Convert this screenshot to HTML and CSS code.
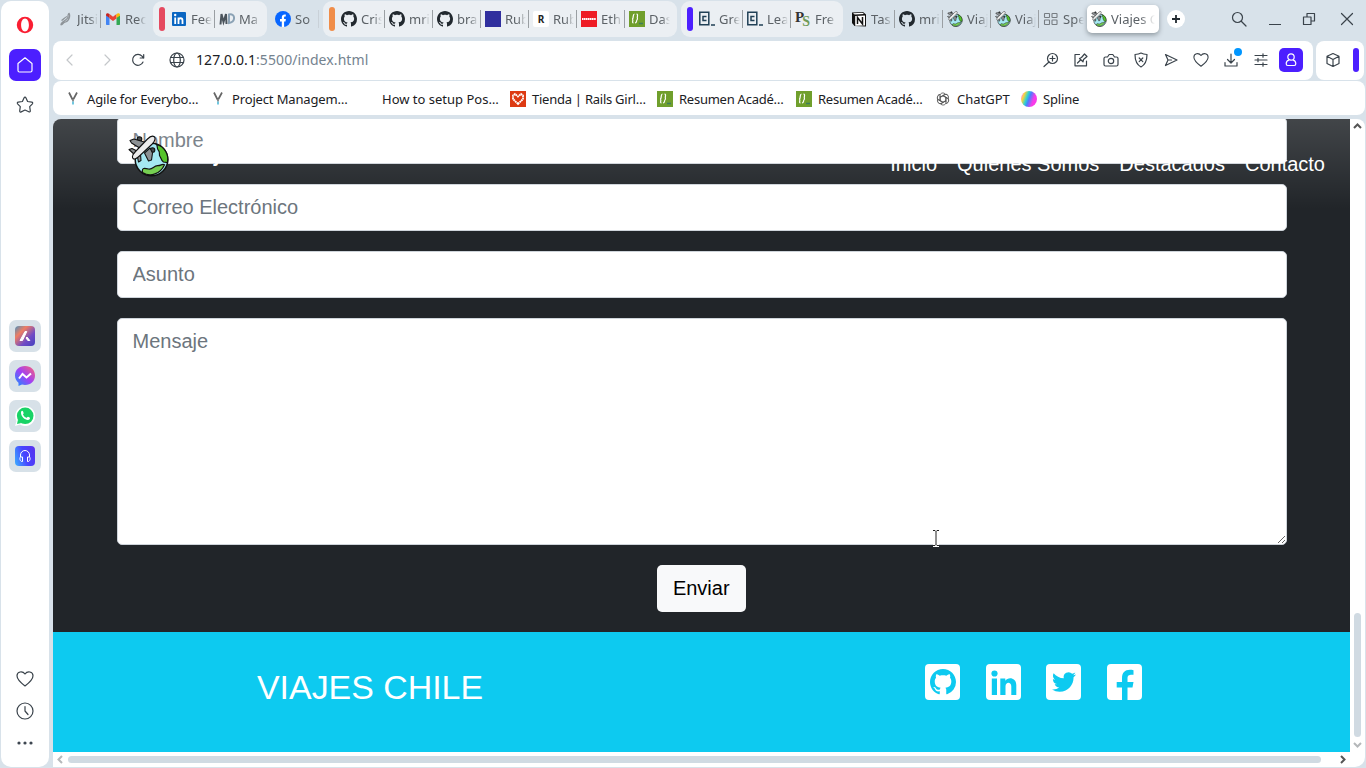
FILE: index.html
```html
<!DOCTYPE html>
<html lang="es">
<head>
<meta charset="utf-8">
<title>Viajes Chile</title>
<link rel="stylesheet" href="styles.css">
</head>
<body>
<svg class="defs" width="0" height="0">
  <symbol id="github" viewBox="0 0 16 16"><path fill-rule="evenodd" d="M8 0C3.58 0 0 3.58 0 8c0 3.54 2.29 6.53 5.47 7.59.4.07.55-.17.55-.38 0-.19-.01-.82-.01-1.49-2.01.37-2.53-.49-2.69-.94-.09-.23-.48-.94-.82-1.13-.28-.15-.68-.52-.01-.53.63-.01 1.08.58 1.23.82.72 1.21 1.87.87 2.33.66.07-.52.28-.87.51-1.07-1.78-.2-3.64-.89-3.64-3.95 0-.87.31-1.59.82-2.15-.08-.2-.36-1.02.08-2.12 0 0 .67-.21 2.2.82.64-.18 1.32-.27 2-.27.68 0 1.36.09 2 .27 1.53-1.04 2.2-.82 2.2-.82.44 1.1.16 1.92.08 2.12.51.56.82 1.27.82 2.15 0 3.07-1.87 3.75-3.65 3.95.29.25.54.73.54 1.48 0 1.07-.01 1.93-.01 2.2 0 .21.15.46.55.38A8.013 8.013 0 0016 8c0-4.42-3.58-8-8-8z"/></symbol>
  <symbol id="travel" viewBox="0 0 42 42">
    <circle cx="23.500" cy="24.500" r="16.300" fill="#a5e8f2" stroke="#111" stroke-width="1.500"/>
    <path d="M28.500 9.500c1.500 2 0 4 2 6s0 4 1.500 6 1 4 3.500 5.500l4 .5c1.500-8-3-16-11-18z" fill="#56c42c" stroke="#111" stroke-width="1.200"/>
    <path d="M14.500 37.500c-1-5 2-4.500 6-3.500s5-3 9-3.300c4 0 4-2.200 7-1-4 9-14 13-22 7.800z" fill="#76cf52" stroke="#111" stroke-width="1.200"/>
    <g fill="#8d9194" stroke="#111" stroke-width="1.100" stroke-linejoin="round">
      <circle cx="11.500" cy="4" r="2.300" fill="#44484b"/>
      <path d="M2 5.500L6 4l12 3.500-5.500 6L3.500 8z"/>
      <circle cx="24.500" cy="15" r="2.300" fill="#44484b"/>
      <path d="M16.500 18l5.500-5 2.500 5-1 7-3 1z"/>
      <path d="M1 14.500l3-1 6 3-2.500 4z"/>
      <path d="M9.500 22l3-2.500.5 6-2.500 1.500z"/>
    </g>
    <path d="M5 23.500c-1.500-2 .5-5 2.500-7L19.500 4c2-2 5-3.500 6.700-2.300 1.700 1.500.5 4.800-2 7.300L12 20.500c-2.500 2.300-5.500 4.500-7 3z" fill="#ececec" stroke="#111" stroke-width="1.100"/>
  </symbol>
  <symbol id="braces" viewBox="0 0 16 16"><path fill="#709f2c" d="M0 0h16v16H0z"/><path d="M5.500 3C4 3 4.500 5 4 7c0 1-1 1-1 1s1 0 .8 1.500S3.300 12 4.500 12M7.500 3c1.500 0 1 2 .8 3.500S9 8 9 8 8 8 7.700 9.500 7.500 12 6 12" fill="none" stroke="#fff" stroke-width="1.200"/><path d="M10 12.500h4" stroke="#3c7d5d" stroke-width="1.500"/></symbol>
  <symbol id="ccase" viewBox="0 0 16 16"><path d="M.8 1.200h9v12.500h-9zM12 14h4M7.500 5.500H4v4h3.500" fill="none" stroke="#204056" stroke-width="1.500"/></symbol>
  <symbol id="ymark" viewBox="0 0 16 16"><path d="M4 1.500l3.500 7M12 1.500L8.500 8" fill="none" stroke="#666" stroke-width="1.700"/><path d="M8 8v2.500" stroke="#666" stroke-width="1.500"/><path d="M8 10.500v3" stroke="#42b4d4" stroke-width="1.500"/></symbol>
  <symbol id="heart" viewBox="0 0 18 18"><path d="M9 16C5 13 1 9.500 1 5.800 1 1.500 6.500.5 9 4c2.500-3.500 8-2.500 8 1.800C17 9.500 13 13 9 16z"/></symbol>
</svg>

<aside class="sidebar">
  <svg class="opera" width="18" height="18" viewBox="0 0 18 18"><path fill="#fa1e32" fill-rule="evenodd" d="M9 .7a8.200 8.300 0 100 16.600A8.200 8.300 0 009 .7zm0 1.800c2.300 0 3.900 2.900 3.900 6.500s-1.600 6.500-3.900 6.500S5.100 12.600 5.100 9 6.700 2.500 9 2.500z"/></svg>
  <div class="tile home"><svg class="line" width="16" height="16" viewBox="0 0 16 16"><path d="M1 6.500L8 .8l7 5.700v7c0 1-.7 1.500-1.500 1.500h-11C1.700 15 1 14.500 1 13.500z"/></svg></div>
  <svg class="line star" width="18" height="18" viewBox="0 0 18 18"><path d="M9 1.200c.5 0 .8.300 1 .7l1.600 3.600 4.200.6c.9.200 1.200 1 .6 1.700l-2.700 2.800.6 4.200c.1 1-.7 1.500-1.500 1L9 14l-3.800 1.900c-.8.400-1.600-.1-1.500-1l.6-4.300-2.700-2.800c-.6-.7-.3-1.500.6-1.700l4.200-.6L8 1.900c.2-.4.500-.7 1-.7z"/></svg>
  <div class="apps">
    <div class="tile"><i class="app aria"><svg width="20" height="20" viewBox="0 0 20 20"><path d="M10 5.500h1.800L7.500 14.500H5zM12 11l2.800 3.500h-2L11 12z" fill="#fff" stroke="#fff" stroke-linejoin="round"/></svg></i></div>
    <div class="tile"><svg width="20" height="20" viewBox="0 0 20 20"><defs><linearGradient id="ms" x1="0" y1="1" x2="1" y2="0"><stop stop-color="#1292ff"/><stop offset=".5" stop-color="#a040f5"/><stop offset="1" stop-color="#ff6373"/></linearGradient></defs><path fill="url(#ms)" d="M10 0c6 0 10 4 10 9.500S16 19 10 19c-1 0-2-.1-3-.4L3.500 20v-3.300C1.300 15 0 12.500 0 9.500 0 4 4 0 10 0z"/><path d="M4 12.500L7.500 8l4 3.500L16 7.500" fill="none" stroke="#fff" stroke-width="2"/></svg></div>
    <div class="tile"><svg width="20" height="20" viewBox="0 0 20 20"><path fill="#fff" d="M0 20l1.500-5A10 10 0 115 18.600z"/><circle cx="10.200" cy="9.800" r="8.300" fill="#19d366"/><path d="M2 18l1-4.500 3.500 3.500z" fill="#19d366"/><path d="M6 6c1-2 2-1.200 2.600 1 .3.700-.9 1.200-.5 1.700.9 1.500 1.900 2.500 3.300 3 .6.300 1-1.200 1.600-1 2 .9 2.500 1 1.600 2.500-2 2.500-9-1.500-8.600-7.200z" fill="#fff"/></svg></div>
    <div class="tile"><i class="app player"><svg width="20" height="20" viewBox="0 0 20 20"><path d="M5.500 11V9a4.500 4.500 0 019 0v2M5.500 11h2v4.500c-3 .5-3-4.500-2-4.500zM14.500 11h-2v4.500c3 .5 3-4.500 2-4.500z" fill="none" stroke="#fff" stroke-width="1"/></svg></i></div>
  </div>
  <div class="bottom">
    <svg class="line" width="18" height="18"><use href="#heart"/></svg>
    <svg class="line" width="18" height="18" viewBox="0 0 18 18"><circle cx="9" cy="9" r="8"/><path d="M9 4.500V9l3 3.500"/></svg>
    <svg width="18" height="6" viewBox="0 0 18 6" fill="#3d4650"><circle cx="3" cy="3" r="1.600"/><circle cx="9" cy="3" r="1.600"/><circle cx="15" cy="3" r="1.600"/></svg>
  </div>
</aside>

<div class="main">
  <div class="tabs">
    <div class="tab"><svg class="plain" viewBox="0 0 16 16"><path d="M4 14c-1-3 8-5 7-9 0-2 1-2 1-3 1 2 1 2 .500 4s-1 4-4 5-2 2-4.500 3M4.500 9.500c2-1 3-3 5.500-4" stroke="#8e9499" stroke-width="1.300"/></svg><span>Jitsi</span></div>
    <div class="tab last"><svg viewBox="0 0 16 16"><path fill="#4285f4" d="M1 4l3.500 2.500V14H2c-.6 0-1-.4-1-1z"/><path fill="#34a853" d="M15 4l-3.500 2.500V14H14c.6 0 1-.4 1-1z"/><path fill="#ea4335" d="M4.500 3L8 5.800 11.500 3v4.500L8 10 4.500 7.500z"/><path fill="#c5221f" d="M1 4c0-2 2-2 3.500-1v4L1 4.500z"/><path fill="#fbbc04" d="M15 4c0-2-2-2-3.500-1v4L15 4.500z"/></svg><span>Rec</span></div>
    <div class="group red"><b></b>
      <div class="tab"><svg viewBox="0 0 16 16"><rect x="1" y="1" width="14" height="14" rx="1" fill="#0a66c2"/><path d="M4.200 6.500V13M7.500 13V6.500M7.500 9.500c0-3 4-3 4 0V13" stroke="#fff" stroke-width="1.800" fill="none"/><circle cx="4.200" cy="4" r="1.200" fill="#fff"/></svg><span>Fee</span></div>
      <div class="tab last"><svg viewBox="0 0 16 16"><path d="M1.500 13.500L2.500 3l2 8 2.500-8 .5 10" fill="none" stroke="#4b545c" stroke-width="2"/><path d="M10 12V3.500c6.500-1.500 7 7.500 0 8.500z" fill="none" stroke="#8ba2b5" stroke-width="2"/></svg><span>Ma</span></div>
    </div>
    <div class="tab fb"><svg viewBox="0 0 16 16"><circle cx="8" cy="8" r="8" fill="#0866ff"/><path fill="#fff" d="M6.800 16v-5.500H5V8h1.800V6.500c0-2.600 1.600-3.300 4-2.900v2c-1.400-.1-1.700.2-1.700 1V8h1.800l-.4 2.500H9.100V16z"/></svg><span>So</span></div>
    <div class="group orange"><b></b>
      <div class="tab"><svg><use href="#github"/></svg><span>Cris</span></div>
      <div class="tab"><svg><use href="#github"/></svg><span>mri</span></div>
      <div class="tab"><svg><use href="#github"/></svg><span>bra</span></div>
      <div class="tab"><svg viewBox="0 0 16 16"><path fill="#302f9e" d="M0 0h16v16H0z"/></svg><span>Rub</span></div>
      <div class="tab"><i class="letter">R</i><span>Rub</span></div>
      <div class="tab"><svg viewBox="0 0 16 16"><path fill="#ee1c25" d="M0 0h16v16H0z"/><path d="M1 8h14" stroke="#fff" stroke-width="1.800" stroke-dasharray="1.500 .4"/></svg><span>Eth</span></div>
      <div class="tab last"><svg><use href="#braces"/></svg><span>Das</span></div>
    </div>
    <div class="group violet"><b></b>
      <div class="tab"><svg><use href="#ccase"/></svg><span>Gre</span></div>
      <div class="tab"><svg><use href="#ccase"/></svg><span>Lea</span></div>
      <div class="tab last"><i class="ps">P<em>S</em></i><span>Fre</span></div>
    </div>
    <div class="tab notion"><svg viewBox="0 0 16 16"><path d="M1 1.500L12 1l3 2.500v12L3.500 15 1 12z" fill="#111"/><path d="M2 2.200l9.500-.5L13 3l-9.300.5zM4.200 5L14 4.500v10l-9.800.3z" fill="#fff"/><path d="M6.500 13V6.500l5 6.500V6" fill="none" stroke="#111" stroke-width="1.500"/></svg><span>Tas</span></div>
    <div class="tab"><svg><use href="#github"/></svg><span>mri</span></div>
    <div class="tab"><svg><use href="#travel"/></svg><span>Viaj</span></div>
    <div class="tab"><svg><use href="#travel"/></svg><span>Viaj</span></div>
    <div class="tab last"><svg class="plain" viewBox="0 0 16 16" stroke="#777d82" stroke-width="1.100"><rect x="1.500" y="2.500" width="5" height="4" rx=".5"/><rect x="9" y="2.500" width="5" height="4" rx=".5"/><rect x="1.500" y="9" width="5" height="4.500" rx=".5"/><rect x="9" y="9" width="5" height="4.500" rx=".5"/></svg><span>Spe</span></div>
    <div class="tab active"><svg><use href="#travel"/></svg><span>Viajes C</span></div>
    <div class="plus"><svg width="10" height="10" viewBox="0 0 10 10"><path d="M5 1v8M1 5h8" stroke="#222a30" stroke-width="1.800"/></svg></div>
    <div class="window">
      <svg class="line" width="16" height="16" viewBox="0 0 16 16"><circle cx="6.500" cy="6.500" r="5"/><path d="M10.500 10.500l4.500 4.500"/></svg>
      <svg class="line" width="12" height="16" viewBox="0 0 12 16"><path d="M0 13.500h12"/></svg>
      <svg class="line" width="14" height="14" viewBox="0 0 14 14"><path d="M1.500 5h7.500v7.500H1.500zM5 5V1.500h7.500V9H9"/></svg>
      <svg class="line" width="14" height="14" viewBox="0 0 14 14"><path d="M1.500 1.500l11 11M12.500 1.500l-11 11"/></svg>
    </div>
  </div>

  <div class="bar">
    <div class="address">
      <svg class="line dim" width="8" height="12" viewBox="0 0 8 12"><path d="M6 1L1 6l5 5"/></svg>
      <svg class="line dim fwd" width="8" height="12" viewBox="0 0 8 12"><path d="M2 1l5 5-5 5"/></svg>
      <svg class="line reload" width="14" height="14" viewBox="0 0 14 14"><path d="M12 9A5.400 5.400 0 1111 3.200L12.500 5M12.700 1.500V5H9.200"/></svg>
      <svg class="line globe" width="16" height="16" viewBox="0 0 16 16"><circle cx="8" cy="8" r="7"/><ellipse cx="8" cy="8" rx="3.300" ry="7"/><path d="M1.800 5.500h12.400M1.800 10.500h12.400"/></svg>
      <div class="url">127.0.0.1<span>:5500/index.html</span></div>
      <div class="tools">
        <svg class="line" viewBox="0 0 18 18"><circle cx="10.500" cy="7.500" r="5"/><path d="M7 11l-5 4.500M8 7.500h5M10.500 5v5"/></svg>
        <svg class="line" viewBox="0 0 18 18"><path d="M7.500 3.500H3v11.300h11.500V10M5.500 12l3-3M7.500 7.500l3.500 3.300.5-2.300 3.500-3L12.500 3l-3 3.500z"/></svg>
        <svg class="line" viewBox="0 0 18 18"><path d="M3.500 6h2l1.700-2.500h3.600L12.500 6h2c1 0 1.500.5 1.500 1.500v6c0 1-.5 1.500-1.500 1.500h-11c-1 0-1.500-.5-1.500-1.500v-6C2 6.500 2.500 6 3.500 6z"/><circle cx="9" cy="10" r="2.700"/></svg>
        <svg class="line" viewBox="0 0 18 18"><path d="M9 2c2 1.200 4 1.400 6 1.500 0 6-1.500 10-6 12.500C4.500 13.500 3 9.500 3 3.500 5 3.400 7 3.200 9 2zM7.200 7l3.600 3.600M10.800 7l-3.600 3.600"/></svg>
        <svg class="line" viewBox="0 0 18 18"><path d="M3.500 3.500L15 9 3.500 14.500 6 9zM6 9h3.500"/></svg>
        <svg class="line"><use href="#heart" x="1" y="1" width="16" height="16"/></svg>
        <div class="download"><svg class="line" viewBox="0 0 18 18"><path d="M9 3v9M5.500 8.500L9 12l3.500-3.500M3 11.500V15h12v-3.500"/></svg><i></i></div>
        <svg class="line" viewBox="0 0 18 18"><path d="M3 4.500h12M3 9h12M3 13.500h12M11 2.800v3.400M6 7.300v3.400M11 11.800v3.400"/></svg>
        <div class="user"><svg class="line" width="18" height="18" viewBox="0 0 18 18"><circle cx="9" cy="6" r="3.200"/><path d="M6.800 9.200C5 9.700 4.200 11 4.200 12.800c0 1.200.5 1.700 1.500 1.700h6.600c1 0 1.500-.5 1.500-1.700 0-1.800-.8-3.100-2.600-3.600"/></svg></div>
      </div>
    </div>
    <div class="extra"><svg class="line" width="16" height="16" viewBox="0 0 16 16"><path d="M8 1.500l6 2.800v7.200l-6 3-6-3V4.300zM2 4.300L8 7.500l6-3.200M8 7.500v7"/></svg><i></i></div>
  </div>

  <div class="bookmarks">
    <div class="w145 tight"><svg><use href="#ymark"/></svg>Agile for Everybo…</div>
    <div class="w150 tight"><svg><use href="#ymark"/></svg>Project Managem…</div>
    <div class="w150"><svg></svg>How to setup Pos…</div>
    <div class="w147 tighter"><svg viewBox="0 0 16 16"><path fill="#dd3a12" d="M0 0h16v16H0z"/><path d="M8 13L3 8V4.500L5 3l3 2.500L11 3l2 1.500V8z" fill="none" stroke="#fff" stroke-width="1.800" stroke-dasharray="1.800 .5"/></svg>Tienda | Rails Girl…</div>
    <div class="w139 tighter"><svg><use href="#braces"/></svg>Resumen Acadé…</div>
    <div class="w139 tighter"><svg><use href="#braces"/></svg>Resumen Acadé…</div>
    <div class="w86"><svg viewBox="0 0 16 16" fill="none" stroke="#555" stroke-width=".9"><g id="petal"><path d="M5 9.500V4.700C5 1.500 9.500 1.200 10.500 3.500M5 6.500l4.500-2.600"/></g><use href="#petal" transform="rotate(60 8 8)"/><use href="#petal" transform="rotate(120 8 8)"/><use href="#petal" transform="rotate(180 8 8)"/><use href="#petal" transform="rotate(240 8 8)"/><use href="#petal" transform="rotate(300 8 8)"/></svg>ChatGPT</div>
    <div class="tight"><i class="spline"></i>Spline</div>
  </div>

  <div class="frame">
    <div class="page">
      <header class="navbar">
        <svg class="logo" width="42" height="42"><use href="#travel"/></svg>
        <div class="brand">Viajes Chile</div>
        <nav><a>Inicio</a><a>Quienes Somos</a><a>Destacados</a><a>Contacto</a></nav>
      </header>
      <form class="contact">
        <input placeholder="Nombre">
        <input placeholder="Correo Electrónico">
        <input placeholder="Asunto">
        <textarea placeholder="Mensaje"></textarea>
        <button type="button">Enviar</button>
      </form>
      <footer>
        <h2>VIAJES CHILE</h2>
        <div class="social">
          <i><svg width="26" height="26"><use href="#github"/></svg></i>
          <i><svg width="35" height="35" viewBox="0 0 35 35"><circle cx="8.500" cy="8.500" r="3.100"/><path d="M5.800 13.500H11V30H5.800zM14.300 13.500h5v2.300c2.500-4.300 11-3.500 11 4.200v10h-5v-8.500c0-5-5.800-5-5.800 0V30h-5.200z"/></svg></i>
          <i><svg width="24" height="24" viewBox="0 0 24 24"><path d="M23.953 4.570a10 10 0 01-2.825.775 4.958 4.958 0 002.163-2.723c-.951.555-2.005.959-3.127 1.184a4.920 4.920 0 00-8.384 4.482C7.690 8.095 4.067 6.130 1.640 3.162a4.822 4.822 0 00-.666 2.475c0 1.710.87 3.213 2.188 4.096a4.904 4.904 0 01-2.228-.616v.06a4.923 4.923 0 003.946 4.827 4.996 4.996 0 01-2.212.085 4.936 4.936 0 004.604 3.417 9.867 9.867 0 01-6.102 2.105c-.39 0-.779-.023-1.170-.067a13.995 13.995 0 007.557 2.209c9.053 0 13.998-7.496 13.998-13.985 0-.21 0-.42-.015-.63A9.935 9.935 0 0024 4.590z"/></svg></i>
          <i><svg width="35" height="36" viewBox="0 0 35 36"><path d="M15 36V23.500H9.700v-5.500H15v-3.500c0-7 4-9.700 11.500-8.300v4.500c-4.500-.2-6 .3-6 4V18h6l-1 5.500h-5V36z"/></svg></i>
        </div>
      </footer>
      <svg class="cursor" width="8" height="18" viewBox="0 0 8 18"><path d="M1 1.500h2l1 1 1-1h2M4 2.500v13M1 16.500h2l1-1 1 1h2" fill="none" stroke="#fff" stroke-width="3"/><path d="M1 1.500h2l1 1 1-1h2M4 2.500v13M1 16.500h2l1-1 1 1h2" fill="none" stroke="#222"/></svg>
    </div>
    <div class="vscroll"><svg width="9" height="6" viewBox="0 0 9 6"><path d="M1 5l3.500-3.500L8 5" stroke="#555"/></svg><i></i><svg width="9" height="6" viewBox="0 0 9 6"><path d="M1 1l3.500 3.500L8 1" stroke="#b5b8ba"/></svg></div>
    <div class="hscroll"><svg width="6" height="9" viewBox="0 0 6 9"><path d="M5 1L1.500 4.500 5 8" stroke="#b5b8ba"/></svg><i></i><svg width="6" height="9" viewBox="0 0 6 9"><path d="M1 1l3.500 3.500L1 8" stroke="#555"/></svg></div>
  </div>
</div>
</body>
</html>
```
FILE: styles.css
```css
* { box-sizing: border-box; }
body { margin: 0; width: 1366px; height: 768px; overflow: hidden; background: #d8e2ea; display: flex; font-family: "Noto Sans", sans-serif; }
svg { display: block; flex: none; }
.defs { position: absolute; }
.line { fill: none; stroke: #3a434b; stroke-width: 1.2; stroke-linejoin: round; stroke-linecap: round; }

.sidebar { width: 48px; margin: 1px 4px 1px 1px; background: #fff; border-radius: 10px; display: flex; flex-direction: column; align-items: center; flex: none; }
.tile { width: 32px; height: 32px; border-radius: 7px; background: #d7e1e8; display: flex; align-items: center; justify-content: center; }
.opera { margin: 15px 0; }
.home { background: #4c1fff; }
.home .line { stroke: #fff; }
.star { margin-top: 15px; }
.apps { margin-top: 206px; display: flex; flex-direction: column; gap: 8px; }
.app { width: 20px; height: 20px; border-radius: 4px; }
.aria { background: linear-gradient(135deg, #4b93bd, #ee7d63 30%, #714cc5 65%, #4442bf); }
.player { background: linear-gradient(70deg, #3cb0ff, #4644ff 50%, #5b31ec); }
.bottom { margin-top: auto; padding: 0 1px 21px 0; display: flex; flex-direction: column; align-items: center; gap: 14px; }
.bottom svg:last-child { margin-top: 6px; }

.main { width: 1313px; flex: none; display: flex; flex-direction: column; }
.tabs { height: 41px; display: flex; align-items: flex-start; padding: 1px 0 0 4px; }
.tab { width: 48px; height: 36px; flex: none; display: flex; align-items: center; gap: 4px; position: relative; }
.tab > svg { width: 16px; height: 16px; fill: #22292f; }
.tab > svg.plain { fill: none; }
.tab > span { width: 21px; overflow: hidden; white-space: nowrap; font-size: 13px; color: #5c6267; -webkit-mask: linear-gradient(90deg, #000 60%, transparent); mask: linear-gradient(90deg, #000 60%, transparent); }
.tab:not(.last):not(.active)::after { content: ""; width: 1px; height: 18px; background: #9a9fa3; margin-left: -2px; }
.tab.fb::after { opacity: .25; }
.group { display: flex; height: 36px; border-radius: 9px; background: #ebeff3; padding-left: 6px; }
.group b { width: 6px; height: 24px; border-radius: 3px; margin: 6px 6px 0 0; }
.red { margin-right: 8px; }
.orange { margin-right: 4px; }
.violet { margin-right: 8px; }
.red b { background: #e54a60; }
.orange b { background: #f08d49; }
.violet b { background: #4c1fff; }
.letter, .ps { width: 16px; height: 16px; flex: none; font-style: normal; text-align: center; }
.letter { background: #fff; border-radius: 2px; font: bold 10px/16px "Noto Sans", sans-serif; color: #222; }
.ps { font: bold 15px/13px "Liberation Serif", serif; color: #333; display: flex; }
.ps em { font-style: normal; color: #6f9b58; margin: 4px 0 0 -2px; font-size: 14px; }
.tab.active { width: 72px; height: 28px; margin: 4px 0 0 -4px; padding-left: 4px; background: #fff; border-radius: 5px; box-shadow: 0 2px 5px #8e989f; }
.active > span { width: 44px; -webkit-mask: linear-gradient(90deg, #000 65%, transparent); mask: linear-gradient(90deg, #000 65%, transparent); }
.plus { width: 18px; height: 18px; border-radius: 50%; background: #fff; margin: 9px 0 0 8px; display: flex; align-items: center; justify-content: center; }
.window { display: flex; align-items: center; height: 36px; margin-left: auto; padding-right: 12px; gap: 24px; }
.window svg:nth-child(2) { margin: 0 -3px 0 -2px; }

.bar { height: 39px; display: flex; gap: 3px; flex: none; padding-right: 2px; }
.address { width: 1260px; background: #fff; border-radius: 8px; display: flex; align-items: center; padding: 0 11px 1px 13px; }
.dim { stroke: #c4c7ca; }
.fwd { margin-left: 29px; }
.reload { margin-left: 20px; }
.globe { margin-left: 24px; }
.url { margin: -1px 0 0 11px; font-size: 14px; letter-spacing: .08px; color: #1b2024; }
.url span { color: #75838f; }
.tools { margin-left: auto; display: flex; align-items: center; gap: 12px; margin-right: -1px; }
.tools svg { width: 18px; height: 18px; }
.download { position: relative; }
.download i { position: absolute; right: -2px; top: -3px; width: 8px; height: 8px; border-radius: 50%; background: #0096ff; }
.user { width: 24px; height: 24px; margin: 0 0 0 -3px; border-radius: 5px; background: #4c1fff; display: flex; align-items: center; justify-content: center; }
.user svg { stroke: #fff; }
.extra { flex: 1; background: #fff; border-radius: 8px; display: flex; align-items: center; padding: 0 0 1px 9px; }
.extra i { width: 6px; height: 24px; border-radius: 3px; background: #4c1fff; margin-left: 12px; }

.bookmarks { height: 34px; margin: 1px 1px 4px 0; background: #fff; border-radius: 8px; display: flex; align-items: center; padding: 2px 0 0 12px; font-size: 13px; color: #1b2024; flex: none; white-space: nowrap; }
.bookmarks > div { display: flex; align-items: center; gap: 6px; flex: none; }
.bookmarks svg, .spline { width: 16px; height: 16px; }
.tight { letter-spacing: -.15px; }
.tighter { letter-spacing: -.25px; }
.w145 { width: 145px; }
.w150 { width: 150px; }
.w147 { width: 147px; }
.w139 { width: 139px; }
.w86 { width: 86px; }
.spline { border-radius: 50%; background: linear-gradient(110deg, #ff9acb 10%, #ffd23c 20%, #2ed3cf 38%, #4a7dff 50%, #f73be9 72%); }

.frame { width: 1312px; height: 648px; background: #fff; border-radius: 8px 8px 10px 0; overflow: hidden; display: grid; grid-template: 633px 15px / 1297px 15px; }
.page { background: #212529; position: relative; overflow: hidden; font: 20px/30px "Liberation Sans", sans-serif; }
.navbar { position: absolute; left: 0; right: 0; top: 0; height: 90px; display: flex; align-items: center; padding: 0 25px 0 75px; color: #fff; background: linear-gradient(rgba(255,255,255,.15), rgba(255,255,255,0)); }
.logo { margin-top: -16px; }
.brand { font-size: 20px; font-weight: 700; margin: -18px 0 0 14px; }
.navbar nav { margin-left: auto; display: flex; gap: 20px; }
.contact { display: flex; flex-direction: column; gap: 20px; padding: 0 63px 20px 64px; margin-top: -2px; align-items: center; }
.contact input, .contact textarea { width: 100%; height: 47px; border: 1px solid #ced4da; border-radius: 5px; padding: 7.5px 14.5px; font: inherit; background: #fff; display: block; margin: 0; flex: none; }
.contact textarea { height: 227px; padding-top: 6.5px; }
.contact ::placeholder { color: #6c757d; opacity: 1; }
.contact button { width: 89px; height: 47px; border: 0; border-radius: 5px; background: #f8f9fa; font: inherit; color: #000; padding: 0 0 2px; margin-right: 1.5px; }
footer { height: 120px; background: #0dcaf0; color: #fff; display: flex; padding: 32px 208px 0 204px; justify-content: space-between; }
footer h2 { font-weight: 400; font-size: 33.9px; line-height: 46px; margin: 0; }
.social { display: flex; gap: 25.6px; }
.social i { width: 35px; height: 36px; border-radius: 4px; background: #fff; display: flex; align-items: center; justify-content: center; }
.social svg { fill: #0dcaf0; }
.cursor { position: absolute; left: 879px; top: 410px; }
.vscroll, .hscroll { display: flex; align-items: center; }
.vscroll svg, .hscroll svg { fill: none; stroke-width: 2; }
.vscroll { flex-direction: column; padding: 4px 0; }
.vscroll i { width: 7px; height: 124px; border-radius: 4px; background: #d0dae2; margin: auto 0 5px; }
.hscroll { padding: 0 4px; }
.hscroll i { width: 1253px; height: 7px; border-radius: 4px; background: #d0dae2; margin: 0 auto 0 5px; }
```
